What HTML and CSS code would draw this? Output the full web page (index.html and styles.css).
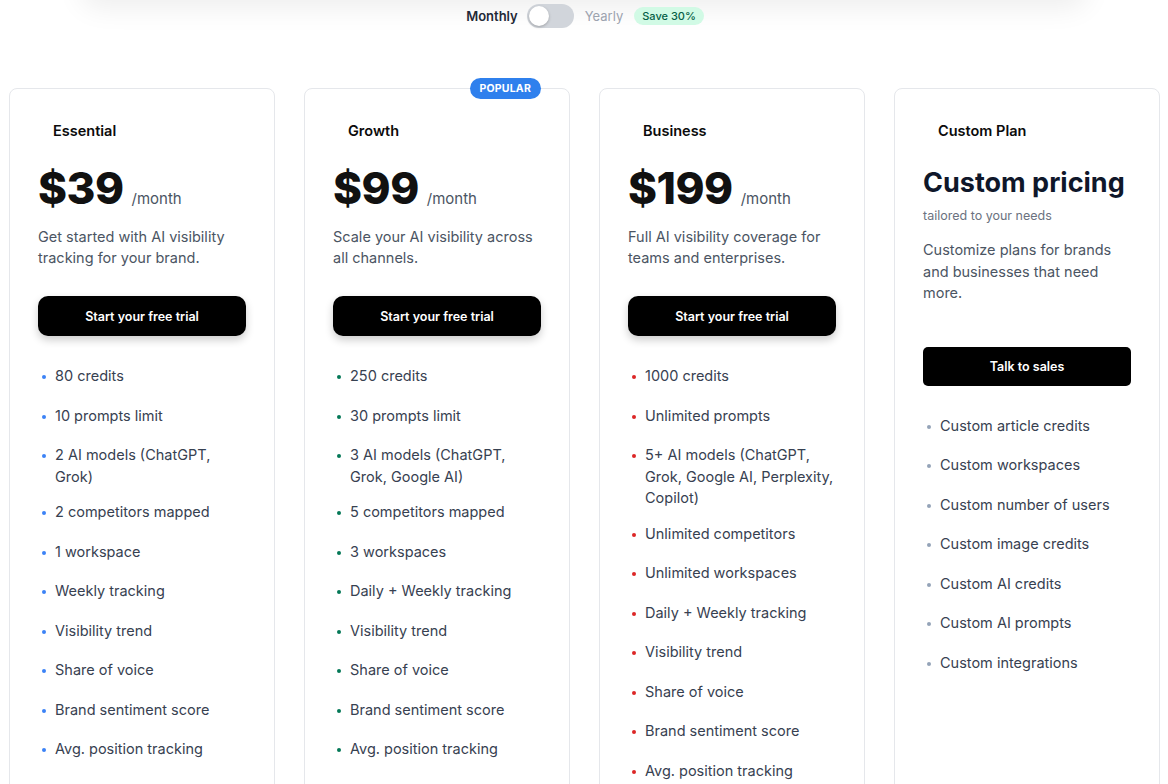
FILE: index.html
```html
<!DOCTYPE html>
<html lang="en">
<head>
<meta charset="utf-8">
<title>Pricing</title>
<link rel="stylesheet" href="styles.css">
</head>
<body>
<div class="top-shade"></div>
<div class="billing">
  <span class="bill-active">Monthly</span>
  <span class="switch"><span class="knob"></span></span>
  <span class="bill-muted">Yearly</span>
  <span class="save">Save 30%</span>
</div>

<div class="plans">
  <section class="card">
    <h3 class="plan-name">Essential</h3>
    <div class="price"><span class="amount">$39</span><span class="per">/month</span></div>
    <p class="desc">Get started with AI visibility tracking for your brand.</p>
    <button class="cta">Start your free trial</button>
    <ul class="features blue">
      <li>80 credits</li>
      <li>10 prompts limit</li>
      <li>2 AI models (ChatGPT, Grok)</li>
      <li>2 competitors mapped</li>
      <li>1 workspace</li>
      <li>Weekly tracking</li>
      <li>Visibility trend</li>
      <li>Share of voice</li>
      <li>Brand sentiment score</li>
      <li>Avg. position tracking</li>
    </ul>
  </section>

  <section class="card">
    <span class="popular">POPULAR</span>
    <h3 class="plan-name">Growth</h3>
    <div class="price"><span class="amount">$99</span><span class="per">/month</span></div>
    <p class="desc">Scale your AI visibility across all channels.</p>
    <button class="cta">Start your free trial</button>
    <ul class="features green">
      <li>250 credits</li>
      <li>30 prompts limit</li>
      <li>3 AI models (ChatGPT, Grok, Google AI)</li>
      <li>5 competitors mapped</li>
      <li>3 workspaces</li>
      <li>Daily + Weekly tracking</li>
      <li>Visibility trend</li>
      <li>Share of voice</li>
      <li>Brand sentiment score</li>
      <li>Avg. position tracking</li>
    </ul>
  </section>

  <section class="card">
    <h3 class="plan-name">Business</h3>
    <div class="price"><span class="amount">$199</span><span class="per">/month</span></div>
    <p class="desc">Full AI visibility coverage for teams and enterprises.</p>
    <button class="cta">Start your free trial</button>
    <ul class="features red">
      <li>1000 credits</li>
      <li>Unlimited prompts</li>
      <li>5+ AI models (ChatGPT, Grok, Google AI, Perplexity, Copilot)</li>
      <li>Unlimited competitors</li>
      <li>Unlimited workspaces</li>
      <li>Daily + Weekly tracking</li>
      <li>Visibility trend</li>
      <li>Share of voice</li>
      <li>Brand sentiment score</li>
      <li>Avg. position tracking</li>
    </ul>
  </section>

  <section class="card">
    <h3 class="plan-name">Custom Plan</h3>
    <div class="custom-title">Custom pricing</div>
    <div class="custom-sub">tailored to your needs</div>
    <p class="desc custom-desc">Customize plans for brands and businesses that need more.</p>
    <button class="cta sales">Talk to sales</button>
    <ul class="features gray">
      <li>Custom article credits</li>
      <li>Custom workspaces</li>
      <li>Custom number of users</li>
      <li>Custom image credits</li>
      <li>Custom AI credits</li>
      <li>Custom AI prompts</li>
      <li>Custom integrations</li>
    </ul>
  </section>
</div>
</body>
</html>
```

FILE: styles.css
```css
* { box-sizing: border-box; }
html, body { margin: 0; padding: 0; background: #ffffff; }
body {
  font-family: Inter, "Noto Sans", "Liberation Sans", sans-serif;
  color: #111827;
  overflow: hidden;
  height: 784px;
}
.top-shade {
  height: 40px;
  margin: -40px 80px 0;
  border-radius: 24px;
  background: #fff;
  box-shadow: 0 8px 28px rgba(0, 0, 0, 0.07);
}
.billing {
  display: flex;
  justify-content: center;
  align-items: center;
  height: 24px;
  margin-top: 4px;
  padding-left: 2px;
  font-size: 13px;
}
.bill-active { font-weight: 600; color: #1f2937; margin-right: 9px; }
.bill-muted { color: #9ca3af; margin: 0 11px 0 11px; }
.switch {
  width: 47px;
  height: 24px;
  border-radius: 12px;
  background: #d1d5db;
  padding: 2px;
  display: flex;
  align-items: center;
}
.knob {
  width: 20px;
  height: 20px;
  border-radius: 50%;
  background: #fff;
  box-shadow: 0 1px 3px rgba(0, 0, 0, 0.25);
}
.save {
  background: #d1fae5;
  color: #065f46;
  font-size: 11px;
  font-weight: 500;
  padding: 2px 8px;
  border-radius: 9px;
  line-height: 14px;
}
.plans {
  display: grid;
  grid-template-columns: repeat(4, 266px);
  column-gap: 29px;
  margin: 60px 0 0 9px;
}
.card {
  position: relative;
  border: 1px solid #e5e7eb;
  border-radius: 8px;
  padding: 30px 28px 40px;
  min-height: 760px;
  background: #fff;
}
.popular {
  position: absolute;
  top: -11px;
  right: 28px;
  background: #2f80ed;
  color: #fff;
  font-size: 10.5px;
  font-weight: 700;
  letter-spacing: 0.2px;
  padding: 0 10px;
  height: 21px;
  line-height: 21px;
  border-radius: 11px;
}
.plan-name {
  margin: 0;
  padding: 0 15px;
  font-size: 14.5px;
  font-weight: 600;
  line-height: 24px;
  color: #0b0b0b;
}
.price {
  display: flex;
  align-items: baseline;
  gap: 8px;
  margin-top: 20px;
  line-height: 50px;
}
.amount {
  font-size: 44px;
  font-weight: 800;
  color: #111111;
  letter-spacing: -0.5px;
}
.per { font-size: 15px; color: #4b5563; }
.desc {
  margin: 2px 0 0;
  font-size: 14.5px;
  line-height: 21px;
  color: #4b5563;
}
.cta {
  display: block;
  width: 100%;
  height: 40px;
  margin-top: 28px;
  border: 0;
  border-radius: 10px;
  background: #000;
  color: #fff;
  font-family: inherit;
  font-size: 12.5px;
  font-weight: 600;
  box-shadow: 0 4px 8px rgba(0, 0, 0, 0.2);
}
.cta.sales {
  height: 39px;
  border-radius: 5px;
  box-shadow: none;
  margin-top: 43px;
}
.custom-title {
  margin-top: 23px;
  font-size: 27px;
  font-weight: 700;
  line-height: 34px;
  color: #0f172a;
}
.custom-sub {
  margin-top: 7px;
  font-size: 12.5px;
  line-height: 18px;
  color: #6b7280;
}
.custom-desc { margin-top: 14px; line-height: 21.5px; }
.features {
  list-style: none;
  margin: 29px 0 0;
  padding: 0 0 0 4px;
  display: flex;
  flex-direction: column;
  gap: 14px;
}
.features li {
  position: relative;
  min-height: 25.5px;
  padding-left: 13px;
  font-size: 14.5px;
  line-height: 21.5px;
  color: #374151;
}
.features li::before {
  content: "";
  position: absolute;
  left: 0;
  top: 10px;
  width: 4px;
  height: 4px;
  border-radius: 50%;
  background: currentColor;
}
.features.blue li::before { background: #3b82f6; }
.features.green li::before { background: #047857; }
.features.red li::before { background: #dc2626; }
.features.gray li::before { background: #94a3b8; }
```
